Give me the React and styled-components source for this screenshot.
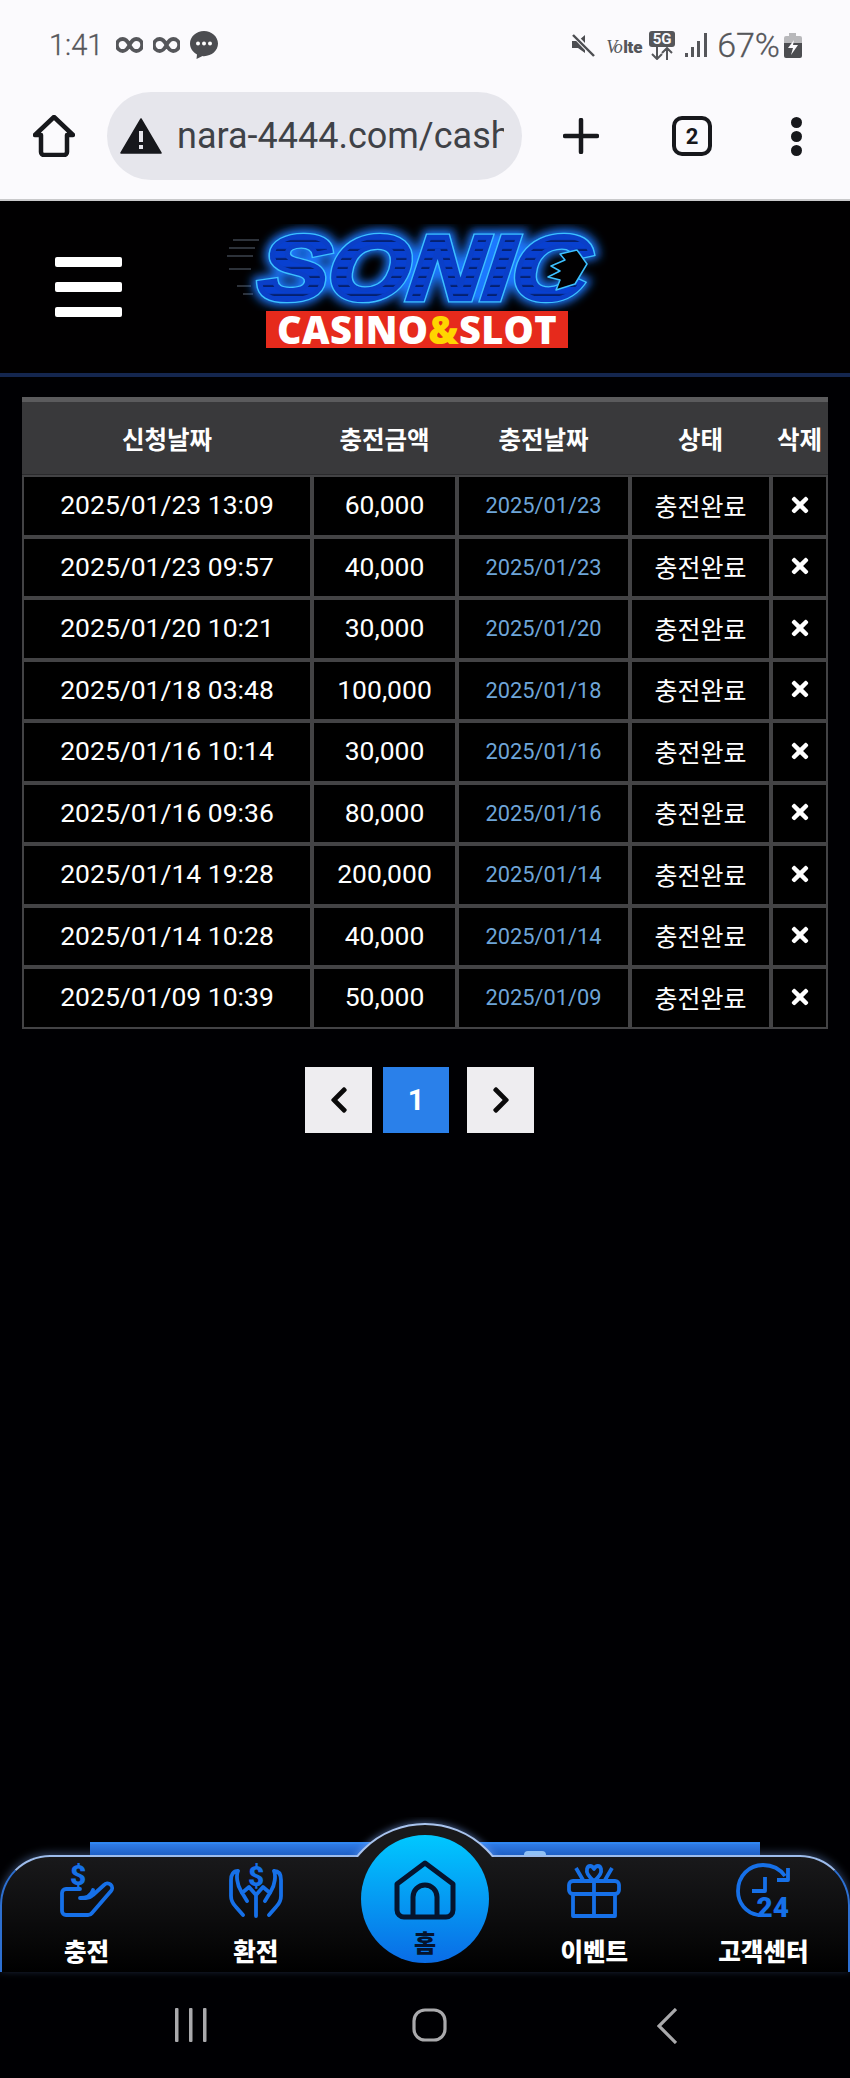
import React from 'react';
import styled, { createGlobalStyle } from 'styled-components';
import { FaTimes, FaChevronLeft, FaChevronRight } from 'react-icons/fa';

const GlobalStyle = createGlobalStyle`
  html, body {
    margin: 0;
    padding: 0;
    background: #000;
  }
  * {
    box-sizing: border-box;
  }
`;

const FONT = `Roboto, "Noto Sans CJK KR", sans-serif`;

const Page = styled.div`
  width: 850px;
  height: 2078px;
  display: flex;
  flex-direction: column;
  background: #000003;
  font-family: ${FONT};
  overflow: hidden;
`;

/* phone chrome */
const Chrome = styled.div`
  height: 201px;
  background: #fbfafd;
  border-bottom: 2px solid #c9c9cb;
  flex-shrink: 0;
`;

const StatusBar = styled.div`
  height: 92px;
  padding: 30px 48px 0 49px;
  display: flex;
  justify-content: space-between;
  align-items: flex-start;
  color: #55565a;
`;

const StatusGroup = styled.div`
  display: flex;
  align-items: center;
  height: 30px;
`;

const StatusText = styled.span`
  font-size: ${p => p.$size}px;
  font-weight: 300;
  line-height: 30px;
  margin: ${p => p.$margin || 0};
  -webkit-text-stroke: 0.3px #55565a;
`;

const StatusIcon = styled.svg`
  display: block;
  flex-shrink: 0;
  margin: ${p => p.$margin || 0};
`;

const Volte = styled.span`
  display: flex;
  align-items: baseline;
  margin: 5px 7px 0 11px;
  font-size: 18px;
  line-height: 17px;
  color: #55565a;
`;

const VolteVo = styled.i`
  font-family: "Liberation Serif", serif;
  letter-spacing: -1.5px;
  margin-right: 2px;
`;

const VolteLte = styled.b`
  font-weight: 900;
  font-size: 17px;
  letter-spacing: -0.3px;
`;

const FiveG = styled.span`
  display: flex;
  flex-direction: column;
  align-items: center;
  width: 26px;
  margin: 1px 10px 0 0;
`;

const FiveGBox = styled.span`
  width: 26px;
  height: 16px;
  background: #55565a;
  border-radius: 3px;
  color: #fbfafd;
  font-size: 15px;
  font-weight: 700;
  line-height: 16px;
  text-align: center;
`;

const Toolbar = styled.div`
  height: 88px;
  padding: 0 32px 0 33px;
  display: flex;
  align-items: center;
`;

const UrlPill = styled.div`
  width: 415px;
  height: 88px;
  margin-left: 32px;
  padding-left: 13px;
  border-radius: 44px;
  background: #e6e6ec;
  display: flex;
  align-items: center;
`;

const UrlText = styled.div`
  width: 327px;
  margin-left: 15px;
  overflow: hidden;
  white-space: nowrap;
  font-size: 36px;
  color: #3f4247;
`;

const TabsButton = styled.div`
  width: 40px;
  height: 40px;
  margin-left: 73px;
  border: 4px solid #17181c;
  border-radius: 10px;
  display: flex;
  align-items: center;
  justify-content: center;
  color: #17181c;
  font-size: 22px;
  font-weight: 700;
`;

const Dots = styled.div`
  margin-left: 79px;
  display: flex;
  flex-direction: column;
  gap: 3px;
`;

const Dot = styled.span`
  width: 11px;
  height: 11px;
  border-radius: 50%;
  background: #17181c;
`;

/* site header */
const SiteHeader = styled.header`
  height: 176px;
  flex-shrink: 0;
  padding: 23px 0 0 55px;
  background: #010001;
  border-bottom: 4px solid #14264f;
  display: flex;
  align-items: flex-start;
`;

const Burger = styled.div`
  width: 67px;
  height: 60px;
  margin-top: 33px;
  display: flex;
  flex-direction: column;
  justify-content: space-between;
`;

const BurgerBar = styled.span`
  height: 10px;
  border-radius: 2px;
  background: #fff;
`;

const Logo = styled.div`
  width: 400px;
  margin-left: 103px;
  display: flex;
  flex-direction: column;
  align-items: flex-start;
`;

const LogoArt = styled.svg`
  display: block;
`;

const LogoBanner = styled.div`
  width: 302px;
  height: 37px;
  margin-left: 41px;
  background: #e62a1c;
  display: flex;
  align-items: center;
  justify-content: center;
  color: #fff;
  font-family: "Open Sans", sans-serif;
  font-size: 38px;
  font-weight: 800;
  line-height: 37px;
  letter-spacing: 0.3px;
  white-space: nowrap;
`;

const LogoAmp = styled.span`
  color: #ffd500;
`;

/* history table */
const Main = styled.main`
  flex: 1;
  padding: 20px 22px 0;
`;

const COLUMNS = '290px 145px 173px 141px 57px';

const HeadRow = styled.div`
  height: 78px;
  display: grid;
  grid-template-columns: ${COLUMNS};
  align-items: center;
  background: #39393b;
  border-top: 5px solid #5b5b5d;
  border-bottom: 1px solid #2a2a2c;
  color: #fff;
  font-size: 24.5px;
  font-weight: 700;
  text-align: center;
`;

const Row = styled.div`
  height: 61.5px;
  display: grid;
  grid-template-columns: ${COLUMNS};
`;

const Cell = styled.div`
  display: flex;
  align-items: center;
  justify-content: center;
  padding-bottom: ${p => (p.$blue ? 0 : 2)}px;
  background: #000;
  border: 2px solid #434345;
  color: ${p => (p.$blue ? '#6ea5d8' : '#fff')};
  font-size: ${p => (p.$blue ? 21.8 : p.$ko ? 25 : 26.5)}px;
  white-space: nowrap;
`;

const Pager = styled.nav`
  margin-top: 38px;
  padding-left: 283px;
  display: flex;
`;

const PageButton = styled.div`
  width: ${p => p.$w}px;
  height: 66px;
  margin-left: ${p => p.$gap || 0}px;
  display: flex;
  align-items: center;
  justify-content: center;
  background: ${p => (p.$active ? '#2a80ea' : '#eeedf0')};
  color: ${p => (p.$active ? '#fff' : '#0a0a0a')};
  font-size: 29px;
  font-weight: 700;
`;

/* bottom nav */
const BottomNav = styled.div`
  position: relative;
  height: 117px;
  flex-shrink: 0;
  display: grid;
  grid-template-columns: repeat(5, 1fr);
  border: 2px solid #7fa5e6;
  border-bottom: none;
  border-left-color: #2d6fd0;
  border-right-color: #2d6fd0;
  border-top-color: #9dbcec;
  border-radius: 50px 50px 0 0;
  background: linear-gradient(#19191b, #0c0c0d 55%, #000);
  box-shadow: 0 -2px 9px rgba(130, 175, 255, 0.35);
`;

const Strip = styled.div`
  position: absolute;
  top: -15px;
  left: 88px;
  right: 88px;
  height: 13px;
  background: linear-gradient(#2f7be6, #1f5fc4);
  border-top: 2px solid #2f86f2;

  &::after {
    content: '';
    position: absolute;
    right: 214px;
    bottom: 0;
    width: 22px;
    height: 4px;
    border-radius: 11px 11px 0 0;
    background: #8fc0f5;
  }
`;

const Bump = styled.div`
  position: absolute;
  top: -40px;
  left: 50%;
  width: 200px;
  height: 40px;
  margin-left: -100px;
  overflow: hidden;
`;

const BumpArc = styled.div`
  width: 176px;
  height: 176px;
  margin: 6px auto 0;
  border: 2px solid #a9c4ee;
  border-radius: 50%;
  background: #19191b;
  box-shadow: 0 -1px 7px rgba(130, 175, 255, 0.5);
`;

const NavItem = styled.div`
  padding-top: 6px;
  display: flex;
  flex-direction: column;
  align-items: center;
  color: #fff;
  font-size: 24.5px;
  font-weight: 900;
  line-height: 30px;
  white-space: nowrap;
`;

const NavIcon = styled.svg`
  display: block;
  margin-bottom: 20px;
`;

const HomeCircle = styled.div`
  position: absolute;
  top: -22px;
  left: 50%;
  width: 128px;
  height: 128px;
  margin-left: -64px;
  padding-top: 25px;
  border-radius: 50%;
  background: linear-gradient(#00c8ff, #0a6ce6);
  display: flex;
  flex-direction: column;
  align-items: center;
  gap: 10px;
  color: #05142e;
  font-size: 24px;
  font-weight: 900;
  line-height: 28px;
`;

/* android buttons */
const SystemNav = styled.div`
  height: 106px;
  flex-shrink: 0;
  padding: 36px 64px 0 72px;
  display: grid;
  grid-template-columns: repeat(3, 1fr);
  justify-items: center;
  align-items: start;
  background: #000003;
`;

const rows = [
  ['2025/01/23 13:09', '60,000', '2025/01/23'],
  ['2025/01/23 09:57', '40,000', '2025/01/23'],
  ['2025/01/20 10:21', '30,000', '2025/01/20'],
  ['2025/01/18 03:48', '100,000', '2025/01/18'],
  ['2025/01/16 10:14', '30,000', '2025/01/16'],
  ['2025/01/16 09:36', '80,000', '2025/01/16'],
  ['2025/01/14 19:28', '200,000', '2025/01/14'],
  ['2025/01/14 10:28', '40,000', '2025/01/14'],
  ['2025/01/09 10:39', '50,000', '2025/01/09'],
];

const Loop = ({ margin }) => (
  <StatusIcon $margin={margin} width="27" height="16" viewBox="0 0 27 16" fill="none" stroke="#55565a" strokeWidth="3.8">
    <path d="M13.5 8C11.5 4 9.5 2 6.8 2A6 6 0 0 0 6.8 14C9.5 14 11.5 12 13.5 8C15.5 4 17.5 2 20.2 2A6 6 0 0 1 20.2 14C17.5 14 15.5 12 13.5 8Z" />
  </StatusIcon>
);

const SONIC_TEXT = {
  x: 30,
  y: 75,
  fontFamily: 'Liberation Sans, sans-serif',
  fontWeight: 700,
  fontStyle: 'italic',
  fontSize: 90,
  textLength: 328,
  lengthAdjust: 'spacingAndGlyphs',
  transform: 'translate(10 0) skewX(-6)',
};

const LogoSvg = () => (
  <LogoArt width="400" height="87" viewBox="0 0 400 87">
    <defs>
      <pattern id="streak" width="6" height="9" patternUnits="userSpaceOnUse">
        <rect width="6" height="9" fill="#0840d0" />
        <rect y="7" width="6" height="2" fill="#04206f" />
      </pattern>
      <filter id="neon" x="-10%" y="-30%" width="120%" height="160%">
        <feGaussianBlur stdDeviation="5" />
      </filter>
    </defs>
    <g stroke="#56606f" strokeWidth="1.5" opacity="0.7">
      <path d="M8 16H34M4 24H30M2 32H28M4 45H26M12 62H26M18 70H28" />
    </g>
    <text {...SONIC_TEXT} fill="none" stroke="#1a78ff" strokeWidth="13" filter="url(#neon)">SONIC</text>
    <text {...SONIC_TEXT} fill="none" stroke="#3cc0ff" strokeWidth="7">SONIC</text>
    <text {...SONIC_TEXT} fill="url(#streak)" stroke="#0a3fc8" strokeWidth="4.500">SONIC</text>
    <path d="M352 26L335 30L340 36L326 42L335 47L323 53L335 56L331 66L350 60L362 40Z" fill="#010001" stroke="#3cc0ff" strokeWidth="1.500" strokeLinejoin="round" />
  </LogoArt>
);

const App = () => (
  <Page>
    <GlobalStyle />
    <Chrome>
      <StatusBar>
        <StatusGroup>
          <StatusText $size={29}>1:41</StatusText>
          <Loop margin="0 0 0 13px" />
          <Loop margin="0 0 0 10px" />
          <StatusIcon $margin="0 0 0 10px" width="28" height="28" viewBox="0 0 28 28">
            <path d="M14 0C6.3 0 0 5.6 0 12.6C0 17.5 3 21.500 7 23.500L6.500 28L12.500 25C13 25.100 13.500 25.200 14 25.200C21.700 25.200 28 19.600 28 12.600C28 5.600 21.700 0 14 0Z" fill="#4c4d51" />
            <circle cx="8" cy="12.600" r="2" fill="#fff" />
            <circle cx="14" cy="12.600" r="2" fill="#fff" />
            <circle cx="20" cy="12.600" r="2" fill="#fff" />
          </StatusIcon>
        </StatusGroup>
        <StatusGroup>
          <StatusIcon width="24" height="24" viewBox="0 0 24 24">
            <path d="M1 8H7L14 2V20L7 15H1Z" fill="#4c4d51" />
            <path d="M2 1L23 23" stroke="#fbfafd" strokeWidth="5" />
            <path d="M2 2L23 23" stroke="#4c4d51" strokeWidth="2.400" />
          </StatusIcon>
          <Volte>
            <VolteVo>Vo</VolteVo>
            <VolteLte>lte</VolteLte>
          </Volte>
          <FiveG>
            <FiveGBox>5G</FiveGBox>
            <StatusIcon width="24" height="13" viewBox="0 0 24 13" fill="none" stroke="#55565a" strokeWidth="2">
              <path d="M7 0V12M2 7L7 12L12 7M17 13V1M12 6L17 1L22 6" />
            </StatusIcon>
          </FiveG>
          <StatusIcon width="22" height="24" viewBox="0 0 22 24" fill="#55565a">
            <rect x="0" y="20" width="3" height="4" />
            <rect x="6" y="14" width="3" height="10" />
            <rect x="12" y="8" width="3" height="16" />
            <rect x="19" y="0" width="3" height="24" />
          </StatusIcon>
          <StatusText $size={34} $margin="0 0 0 10px">67%</StatusText>
          <StatusIcon $margin="0 0 0 4px" width="18" height="25" viewBox="0 0 18 25">
            <path d="M5 0H12V3H16A2 2 0 0 1 18 5V10H0V5A2 2 0 0 1 2 3H5Z" fill="#b8b8bb" />
            <path d="M0 10H18V23A2 2 0 0 1 16 25H2A2 2 0 0 1 0 23Z" fill="#4c4d51" />
            <path d="M10 7L4 15H9L7 22L14 12H9Z" fill="#fbfafd" />
          </StatusIcon>
        </StatusGroup>
      </StatusBar>
      <Toolbar>
        <StatusIcon width="42" height="42" viewBox="0 0 42 42" fill="none" stroke="#17181c" strokeWidth="4.500" strokeLinejoin="round">
          <path d="M2 20L21 2L40 20H34V37A3 3 0 0 1 31 40H11A3 3 0 0 1 8 37V20Z" />
        </StatusIcon>
        <UrlPill>
          <StatusIcon width="42" height="36" viewBox="0 0 42 36">
            <path d="M21 1L41 35H1Z" fill="#17181c" stroke="#17181c" strokeWidth="1.500" strokeLinejoin="round" />
            <rect x="19" y="13" width="4" height="11" fill="#e6e6ec" />
            <rect x="19" y="27" width="4" height="4" fill="#e6e6ec" />
          </StatusIcon>
          <UrlText>nara-4444.com/cash</UrlText>
        </UrlPill>
        <StatusIcon $margin="0 0 0 41px" width="36" height="36" viewBox="0 0 36 36" fill="none" stroke="#17181c" strokeWidth="4.500" strokeLinecap="round">
          <path d="M18 2V34M2 18H34" />
        </StatusIcon>
        <TabsButton>2</TabsButton>
        <Dots>
          <Dot />
          <Dot />
          <Dot />
        </Dots>
      </Toolbar>
    </Chrome>

    <SiteHeader>
      <Burger>
        <BurgerBar />
        <BurgerBar />
        <BurgerBar />
      </Burger>
      <Logo>
        <LogoSvg />
        <LogoBanner>
          CASINO<LogoAmp>&amp;</LogoAmp>SLOT
        </LogoBanner>
      </Logo>
    </SiteHeader>

    <Main>
      <HeadRow>
        <div>신청날짜</div>
        <div>충전금액</div>
        <div>충전날짜</div>
        <div>상태</div>
        <div>삭제</div>
      </HeadRow>
      {rows.map(r => (
        <Row key={r[0]}>
          <Cell>{r[0]}</Cell>
          <Cell>{r[1]}</Cell>
          <Cell $blue>{r[2]}</Cell>
          <Cell $ko>충전완료</Cell>
          <Cell>
            <FaTimes size={24} />
          </Cell>
        </Row>
      ))}
      <Pager>
        <PageButton $w={67}>
          <FaChevronLeft size={30} />
        </PageButton>
        <PageButton $w={66} $gap={11} $active>1</PageButton>
        <PageButton $w={67} $gap={18}>
          <FaChevronRight size={30} />
        </PageButton>
      </Pager>
    </Main>

    <BottomNav>
      <Strip />
      <Bump>
        <BumpArc />
      </Bump>
      <NavItem>
        <NavIcon width="54" height="55" viewBox="0 0 54 55" fill="none" stroke="#1670e8" strokeWidth="3.800" strokeLinecap="round" strokeLinejoin="round">
          <path d="M20 26H6A4 4 0 0 0 2 30V48A4 4 0 0 0 6 52H28A5 5 0 0 0 32 50L51 28A4.500 4.500 0 0 0 44 22L33 32C31 34 29 35 26 35H20C26 35 31 33 33 27" />
          <text x="18" y="22" textAnchor="middle" fontFamily="Roboto, sans-serif" fontWeight="900" fontSize="28" fill="#1670e8" stroke="none">$</text>
        </NavIcon>
        충전
      </NavItem>
      <NavItem>
        <NavIcon width="54" height="55" viewBox="0 0 54 55" fill="none" stroke="#1670e8" strokeWidth="3.800" strokeLinecap="round" strokeLinejoin="round">
          <path d="M9 8C4 8 2 12 2 17V33C2 38 4 41 7 44L14 52M9 8C7 12 8 22 12 28L18 38M13 30L20 24L27 32V53M45 8C50 8 52 12 52 17V33C52 38 50 41 47 44L40 52M45 8C47 12 46 22 42 28L36 38M41 30L34 24L27 32" />
          <text x="27" y="23" textAnchor="middle" fontFamily="Roboto, sans-serif" fontWeight="900" fontSize="28" fill="#1670e8" stroke="none">$</text>
        </NavIcon>
        환전
      </NavItem>
      <NavItem>
        <HomeCircle>
          <StatusIcon width="62" height="60" viewBox="0 0 62 60" fill="none" stroke="#05142e" strokeWidth="5" strokeLinejoin="round">
            <path d="M3 24L31 3L59 24V50A7 7 0 0 1 52 57H10A7 7 0 0 1 3 50Z" />
            <path d="M19 57V37A12 12 0 0 1 43 37V57" />
          </StatusIcon>
          홈
        </HomeCircle>
      </NavItem>
      <NavItem>
        <NavIcon width="54" height="55" viewBox="0 0 54 55" fill="none" stroke="#1670e8" strokeWidth="3.800" strokeLinejoin="round">
          <rect x="2" y="18" width="50" height="13" rx="4" />
          <path d="M6 31V53H48V31M27 18V53M27 18C22 14 19 10 20 6C21 2 25 2 27 6C29 2 33 2 34 6C35 10 32 14 27 18ZM9 5L16 17M45 5L38 17" />
        </NavIcon>
        이벤트
      </NavItem>
      <NavItem>
        <NavIcon width="54" height="55" viewBox="0 0 54 55" fill="none" stroke="#1670e8" strokeWidth="3.800" strokeLinejoin="round">
          <path d="M22 52C10 50 2 40 2 28C2 13 13 2 27 2C36 2 44 6 49 13" />
          <path d="M52 5V17H41" />
          <path d="M29 14V28H16" />
          <text x="53" y="54" textAnchor="end" fontFamily="Roboto, sans-serif" fontWeight="900" fontSize="28" fill="#1670e8" stroke="none">24</text>
        </NavIcon>
        고객센터
      </NavItem>
    </BottomNav>

    <SystemNav>
      <StatusIcon width="32" height="34" viewBox="0 0 32 34" fill="#a9a9ac">
        <rect x="0" y="0" width="3.500" height="34" rx="1" />
        <rect x="14" y="0" width="3.500" height="34" rx="1" />
        <rect x="28" y="0" width="3.500" height="34" rx="1" />
      </StatusIcon>
      <StatusIcon width="35" height="34" viewBox="0 0 35 34" fill="none" stroke="#a9a9ac" strokeWidth="3.200">
        <rect x="2" y="2" width="31" height="30" rx="11" />
      </StatusIcon>
      <StatusIcon width="20" height="36" viewBox="0 0 20 36" fill="none" stroke="#a9a9ac" strokeWidth="3.200">
        <path d="M19 1L2 18L19 35" />
      </StatusIcon>
    </SystemNav>
  </Page>
);

export default App;
